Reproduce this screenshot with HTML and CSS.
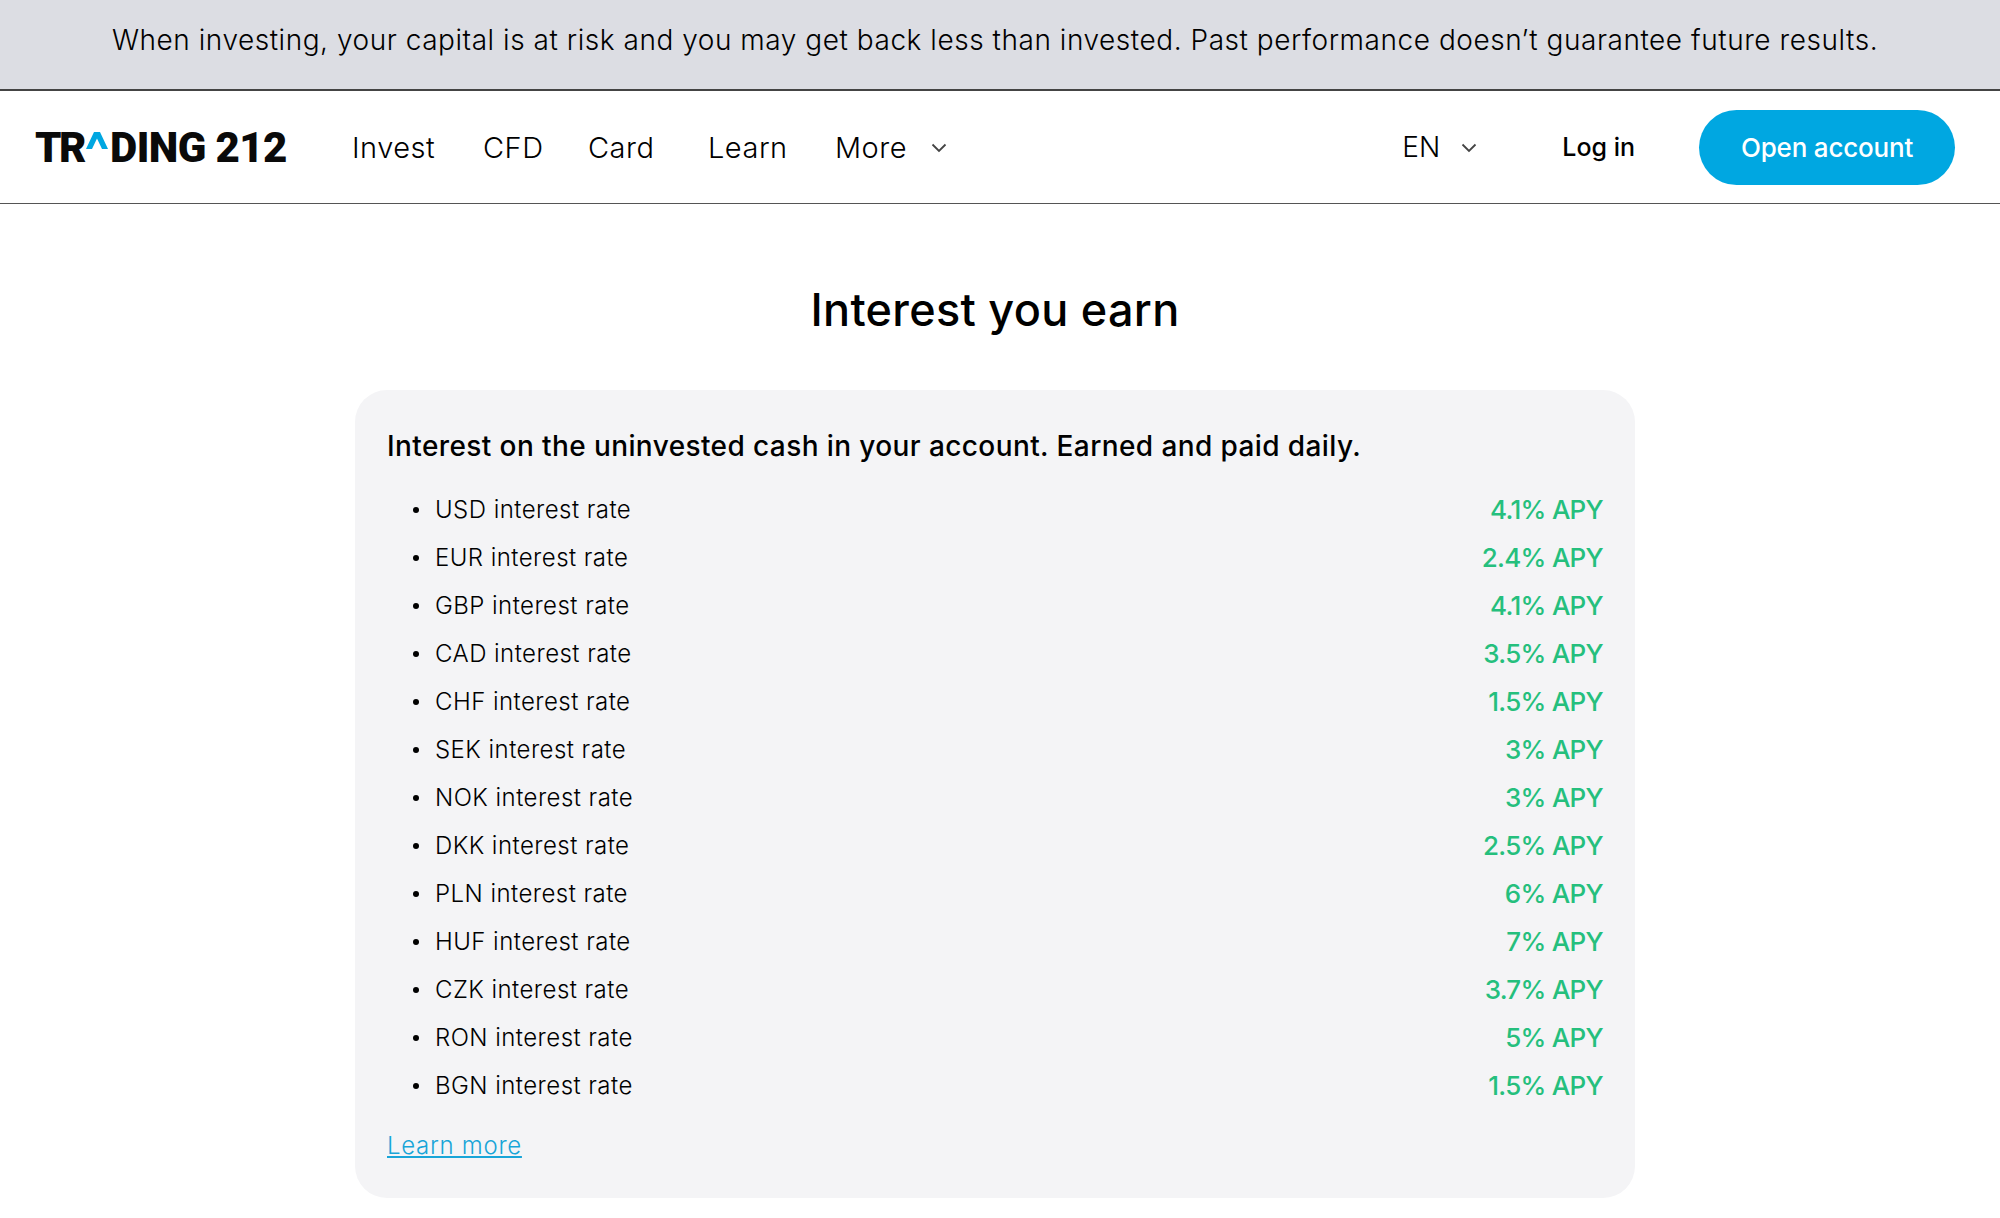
FILE: index.html
```html
<!DOCTYPE html>
<html lang="en">
<head>
<meta charset="utf-8">
<title>Interest you earn</title>
<link rel="stylesheet" href="styles.css">
</head>
<body>
<div class="risk-banner"><p>When investing, your capital is at risk and you may get back less than invested. Past performance doesn’t guarantee future results.</p></div>
<header class="site-header">
  <a class="logo" href="#"><span class="logo-tr">TR</span><svg class="logo-caret" viewBox="0 0 22 17" width="22" height="17"><path d="M0 17 L8 0 H14 L22 17 H16 L11 6.5 L6 17 Z" fill="#00a7e1"/></svg><span>DING 212</span></a>
  <nav class="main-nav">
    <a href="#">Invest</a>
    <a href="#">CFD</a>
    <a href="#">Card</a>
    <a href="#">Learn</a>
    <a href="#" class="with-chevron">More <svg class="chevron" viewBox="0 0 16 10" width="16" height="10"><path d="M1.5 1.5 L8 8 L14.5 1.5" fill="none" stroke="#444" stroke-width="1.8"/></svg></a>
  </nav>
  <div class="header-right">
    <a href="#" class="lang">EN <svg class="chevron" viewBox="0 0 16 10" width="16" height="10"><path d="M1.5 1.5 L8 8 L14.5 1.5" fill="none" stroke="#444" stroke-width="1.8"/></svg></a>
    <a href="#" class="login">Log in</a>
    <a href="#" class="open-account">Open account</a>
  </div>
</header>
<main class="content">
  <h1>Interest you earn</h1>
  <section class="card">
    <h2>Interest on the uninvested cash in your account. Earned and paid daily.</h2>
    <ul class="rates">
      <li><span>USD interest rate</span><b>4.1% APY</b></li>
      <li><span>EUR interest rate</span><b>2.4% APY</b></li>
      <li><span>GBP interest rate</span><b>4.1% APY</b></li>
      <li><span>CAD interest rate</span><b>3.5% APY</b></li>
      <li><span>CHF interest rate</span><b>1.5% APY</b></li>
      <li><span>SEK interest rate</span><b>3% APY</b></li>
      <li><span>NOK interest rate</span><b>3% APY</b></li>
      <li><span>DKK interest rate</span><b>2.5% APY</b></li>
      <li><span>PLN interest rate</span><b>6% APY</b></li>
      <li><span>HUF interest rate</span><b>7% APY</b></li>
      <li><span>CZK interest rate</span><b>3.7% APY</b></li>
      <li><span>RON interest rate</span><b>5% APY</b></li>
      <li><span>BGN interest rate</span><b>1.5% APY</b></li>
    </ul>
    <a class="learn-more" href="#">Learn more</a>
  </section>
</main>
</body>
</html>
```
FILE: styles.css
```css
* { box-sizing: border-box; }
html, body { margin: 0; padding: 0; }
body { font-family: Inter, "Liberation Sans", sans-serif; color: #000; background: #fff; height: 1218px; overflow: hidden; }
a { color: inherit; text-decoration: none; }

.risk-banner { height: 91px; background: #dcdde3; border-bottom: 2px solid #444; display: flex; align-items: center; justify-content: center; padding: 0 10px 10px 0; }
.risk-banner p { margin: 0; font-size: 28px; font-weight: 300; letter-spacing: 0.54px; white-space: nowrap; }

.site-header { height: 113px; border-bottom: 1px solid #555; display: flex; align-items: center; padding: 0 45px 0 35px; }
.logo { display: flex; align-items: center; font-family: Roboto, sans-serif; font-weight: 900; font-size: 42px; width: 317px; color: #0a0a0a; letter-spacing: -0.6px; }
.logo-tr { letter-spacing: -2.4px; }
.logo-caret { margin: -13px 2px 0 2px; }
.main-nav { display: grid; grid-template-columns: 131px 105px 120px 127px auto; align-items: center; font-size: 29px; font-weight: 300; letter-spacing: 0.5px; }
.with-chevron, .lang { display: flex; align-items: center; gap: 24px; }
.lang { gap: 21px; }
.chevron { display: block; margin-top: 2px; }
.header-right { margin-left: auto; display: flex; align-items: center; font-size: 28px; }
.lang { font-weight: 300; margin-right: 85px; }
.login { font-size: 25px; font-weight: 500; margin-right: 64px; }
.open-account { width: 256px; height: 75px; border-radius: 38px; background: #00a7e1; color: #fff; font-size: 26px; font-weight: 500; letter-spacing: -0.2px; display: flex; align-items: center; justify-content: center; }

.content { display: flex; flex-direction: column; align-items: center; padding-right: 10px; }
h1 { margin: 0; height: 186px; display: flex; align-items: center; font-size: 45px; font-weight: 500; letter-spacing: 0.3px; padding-top: 25px; }
.card { width: 1280px; height: 808px; background: #f4f4f6; border-radius: 32px; padding: 32px; }
h2 { margin: 0; padding-top: 1px; font-size: 28px; font-weight: 500; letter-spacing: 0.4px; line-height: 46px; }
.rates { list-style: none; margin: 16px 0 0; padding: 0; }
.rates li { height: 48px; display: flex; align-items: center; justify-content: space-between; font-size: 24px; font-weight: 300; letter-spacing: 0.45px; padding-left: 48px; position: relative; }
.rates li::before { content: ""; position: absolute; left: 26px; top: 22px; width: 6px; height: 6px; border-radius: 50%; background: #000; }
.rates b { font-size: 26px; font-weight: 500; letter-spacing: -0.7px; color: #25bf7d; }
.learn-more { display: inline-block; margin-top: 22px; font-size: 24px; font-weight: 300; letter-spacing: 0.7px; color: #18a5d8; text-decoration: underline; }
```
